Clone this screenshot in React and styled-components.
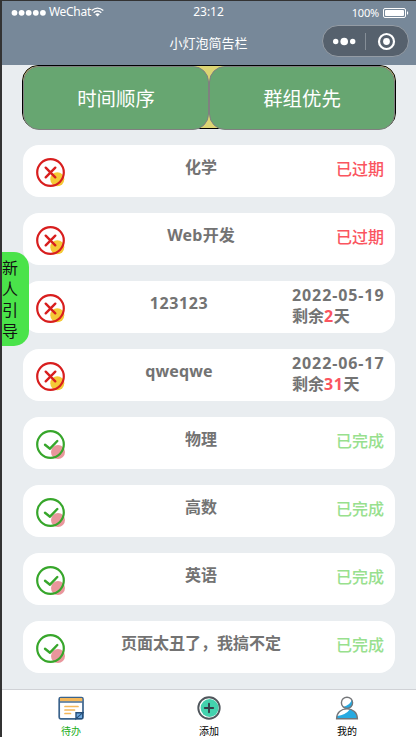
import React from "react";
import styled, { createGlobalStyle } from "styled-components";

const GlobalStyle = createGlobalStyle`
  * { box-sizing: border-box; }
  body {
    margin: 0;
    font-family: "Noto Sans", "Noto Sans CJK SC", sans-serif;
    overflow: hidden;
  }
`;

const Phone = styled.div`
  position: relative;
  display: flex;
  flex-direction: column;
  width: 416px;
  height: 737px;
  border-left: 2px solid #333;
  border-top: 1px solid #333;
  background: #e9edf0;
`;

const Header = styled.header`
  flex: none;
  height: 64px;
  background: #778899;
  color: #fff;
`;

const StatusBar = styled.div`
  display: grid;
  grid-template-columns: 1fr auto 1fr;
  align-items: center;
  height: 22px;
  padding: 0 6px 0 9px;
  font-size: 12px;
  line-height: 20px;
`;

const Carrier = styled.div`
  display: flex;
  align-items: center;
`;

const CarrierName = styled.span`
  margin-left: 3px;
  letter-spacing: -0.3px;
  font-size: 12px;
`;

const Clock = styled.span`
  margin: -1px 4px 0 0;
`;

const Battery = styled.div`
  display: flex;
  align-items: center;
  justify-content: flex-end;
  gap: 4px;
  padding-top: 2px;
  font-size: 11px;
  line-height: 16px;
  letter-spacing: -0.2px;
`;

const TitleBar = styled.div`
  display: grid;
  grid-template-columns: 1fr auto 1fr;
  align-items: center;
  height: 36px;
  padding: 0 7px 0 0;
`;

const AppTitle = styled.h1`
  grid-column: 2;
  margin: 3px 0 0 6px;
  font-size: 13px;
  line-height: 20px;
  font-weight: 400;
`;

const Capsule = styled.div`
  justify-self: end;
  display: flex;
  align-items: center;
  width: 87px;
  height: 32px;
  border: 1px solid #949ca5;
  border-radius: 16px;
  background: #56616d;
`;

const Main = styled.main`
  flex: 1;
  padding: 0 19px 0 20px;
`;

const FilterBar = styled.div`
  display: flex;
  width: 374px;
  height: 64px;
  border: 1px solid #000;
  border-radius: 16px;
  background: #dcd473;
`;

const FilterButton = styled.button`
  flex: 1;
  height: 64px;
  padding: 0 0 2px;
  border: 1px solid #808080;
  border-radius: 16px;
  background: #67a671;
  color: #fff;
  font-family: inherit;
  font-size: 19.4px;
`;

const List = styled.ul`
  display: flex;
  flex-direction: column;
  gap: 16px;
  margin: 16px 1px 0;
  padding: 0;
  list-style: none;
`;

const Card = styled.li`
  display: flex;
  width: 372px;
  height: 52px;
  padding: 0 11px 0 13px;
  border-radius: 16px;
  background: #fff;
  color: #737373;
  font-size: 16px;
  font-weight: 700;
  line-height: 21px;
`;

const CardTitle = styled.div`
  flex: 1;
  padding-top: 12px;
  text-align: center;
  white-space: nowrap;
`;

const Status = styled.div`
  padding-top: 14px;
  color: ${(p) => (p.$done ? "#98e08e" : "#fa5560")};
  font-weight: 500;
`;

const Deadline = styled.div`
  width: 92px;
  padding-top: 4px;
  white-space: nowrap;
`;

const Latin = styled.span`
  letter-spacing: ${(p) => p.$spacing || "0.6px"};
`;

const DaysLeft = styled(Latin)`
  color: #fa5560;
`;

const StateSvg = styled.svg`
  flex: none;
  margin-top: 12px;
`;

const Guide = styled.aside`
  position: absolute;
  left: 0;
  top: 251px;
  width: 27px;
  height: 94px;
  padding: 6px 10px 0 0;
  border-radius: 0 15px 15px 0;
  background: #4ae34a;
  color: #111;
  font-size: 16px;
  line-height: 21px;
`;

const TabBar = styled.nav`
  flex: none;
  display: grid;
  grid-template-columns: repeat(3, 1fr);
  height: 48px;
  border-top: 1px solid #d0d2d6;
  background: #fff;
`;

const Tab = styled.div`
  display: flex;
  flex-direction: column;
  align-items: center;
  padding-top: 5px;
  color: ${(p) => (p.$active ? "#1aad19" : "#000")};
  font-size: 10px;
  line-height: 14px;
`;

const TabIcon = styled.svg`
  display: block;
  margin-bottom: 3px;
`;

function StateIcon({ done }) {
  const color = done ? "#37a62b" : "#d81e1e";
  return (
    <StateSvg width="30" height="30" viewBox="0 0 30 30" fill="none">
      <circle cx={done ? 22 : 21.3} cy={done ? 23 : 22.2} r="7" fill={done ? "#e9969c" : "#f4c936"} />
      <circle cx="14.5" cy="15.5" r="13.3" stroke={color} strokeWidth="2.2" />
      {done ? (
        <path d="m9 15.7 5 4 7.3-7.7" stroke={color} strokeWidth="2.4" strokeLinecap="round" strokeLinejoin="round" />
      ) : (
        <path d="m9.7 10.7 9.6 9.6m0-9.6-9.6 9.6" stroke={color} strokeWidth="2.4" strokeLinecap="round" />
      )}
    </StateSvg>
  );
}

const tasks = [
  { title: "化学", status: "已过期" },
  { title: "开发", prefix: "Web", spacing: "0.2px", status: "已过期" },
  { prefix: "123123", date: "2022-05-19", days: 2 },
  { prefix: "qweqwe", spacing: "0.1px", date: "2022-06-17", days: 31 },
  { title: "物理", status: "已完成", done: true },
  { title: "高数", status: "已完成", done: true },
  { title: "英语", status: "已完成", done: true },
  { title: "页面太丑了，我搞不定", status: "已完成", done: true },
];

function TaskCard({ task }) {
  return (
    <Card>
      <StateIcon done={task.done} />
      <CardTitle>
        {task.prefix && <Latin $spacing={task.spacing}>{task.prefix}</Latin>}
        {task.title}
      </CardTitle>
      {task.date ? (
        <Deadline>
          <Latin $spacing="0.9px">{task.date}</Latin>
          <br />
          剩余<DaysLeft>{task.days}</DaysLeft>天
        </Deadline>
      ) : (
        <Status $done={task.done}>{task.status}</Status>
      )}
    </Card>
  );
}

export default function App() {
  return (
    <>
      <GlobalStyle />
      <Phone>
        <Header>
          <StatusBar>
            <Carrier>
              <svg width="35" height="8" viewBox="0 0 35 8" fill="#fff">
                {[3.5, 10.6, 17.7, 24.8, 31.9].map((x) => (
                  <circle key={x} cx={x} cy="4.8" r="2.9" />
                ))}
              </svg>
              <CarrierName>WeChat</CarrierName>
              <svg width="13" height="10" viewBox="0 0 13 10" fill="none" stroke="#fff" strokeWidth="1.4">
                <path d="M.7 3.5q5.8-4.8 11.6 0M2.7 5.7q3.8-3.2 7.6 0" />
                <path d="m4.2 7.2 2.3 2.4 2.3-2.4q-2.3-1.7-4.6 0z" fill="#fff" stroke="none" />
              </svg>
            </Carrier>
            <Clock>23:12</Clock>
            <Battery>
              100%
              <svg width="27" height="10" viewBox="0 0 27 10">
                <rect x=".5" y=".5" width="22" height="9" rx="1.5" fill="none" stroke="#fff" />
                <rect x="2" y="2" width="19" height="6" rx="1" fill="#fff" />
                <path d="M24 3q2.5 2 0 4z" fill="#fff" />
              </svg>
            </Battery>
          </StatusBar>
          <TitleBar>
            <AppTitle>小灯泡简告栏</AppTitle>
            <Capsule>
              <svg width="85" height="30" viewBox="0 0 85 30" fill="#fff">
                <circle cx="12.7" cy="15.5" r="2.7" />
                <circle cx="21.2" cy="15.5" r="3.8" />
                <circle cx="29.7" cy="15.5" r="2.7" />
                <path d="M42 7h1v17h-1z" fill="#858e97" />
                <circle cx="63.5" cy="15.5" r="7.5" fill="none" stroke="#fff" strokeWidth="2.2" />
                <circle cx="63.5" cy="15.5" r="3.4" />
              </svg>
            </Capsule>
          </TitleBar>
        </Header>
        <Main>
          <FilterBar>
            <FilterButton>时间顺序</FilterButton>
            <FilterButton>群组优先</FilterButton>
          </FilterBar>
          <List>
            {tasks.map((task, i) => (
              <TaskCard key={i} task={task} />
            ))}
          </List>
        </Main>
        <TabBar>
          <Tab $active>
            <TabIcon width="26" height="26" viewBox="0 0 26 26">
              <rect x="1.2" y="2.5" width="23.8" height="21.3" rx="1.5" fill="#fff" stroke="#3b638c" strokeWidth="1.7" />
              <path d="M2 3h22.2v3.4H2z" fill="#f5b85a" />
              <path d="M1.5 7h23" stroke="#3b638c" strokeWidth="1.4" />
              <path d="M7 11.5h13M7 15h9.5M7 18.5h5.5" stroke="#f5b85a" strokeWidth="1.7" strokeLinecap="round" />
              <path d="M18 23.7v-6h7z" fill="#6fa9e0" stroke="#274f79" strokeWidth="1.4" />
              <path d="m18.5 23.5 6-5.5v5.5z" fill="#6fa9e0" stroke="#274f79" />
            </TabIcon>
            待办
          </Tab>
          <Tab>
            <TabIcon width="26" height="26" viewBox="0 0 26 26">
              <circle cx="13" cy="13" r="10.7" fill="#fff" stroke="#50565c" strokeWidth="1.9" />
              <circle cx="13.6" cy="13" r="9" fill="#43d2ae" />
              <path d="M13 8.8v8.4M8.8 13h8.4" stroke="#343f49" strokeWidth="1.9" strokeLinecap="round" />
            </TabIcon>
            添加
          </Tab>
          <Tab>
            <TabIcon width="26" height="26" viewBox="0 0 26 26">
              <circle cx="13" cy="7.8" r="5.6" fill="#fff" />
              <path d="M17.7 4.3q-1 6-8.9 7.6c5.5 4.8 13-1 8.9-7.6z" fill="#27aae1" />
              <path d="M2.6 23.7c0-6 4.5-9.8 10.4-9.8s10.4 3.8 10.4 9.8z" fill="#fff" />
              <path d="M2.8 23.5V21q9-1 13.2-6.8c5 1.5 7.4 4.9 7.4 9.3z" fill="#27aae1" />
              <circle cx="13" cy="7.8" r="5.6" fill="none" stroke="#747679" strokeWidth="1.4" />
              <path d="M2.6 23.7c0-6 4.5-9.8 10.4-9.8s10.4 3.8 10.4 9.8z" fill="none" stroke="#747679" strokeWidth="1.4" />
            </TabIcon>
            我的
          </Tab>
        </TabBar>
        <Guide>新人引导</Guide>
      </Phone>
    </>
  );
}
